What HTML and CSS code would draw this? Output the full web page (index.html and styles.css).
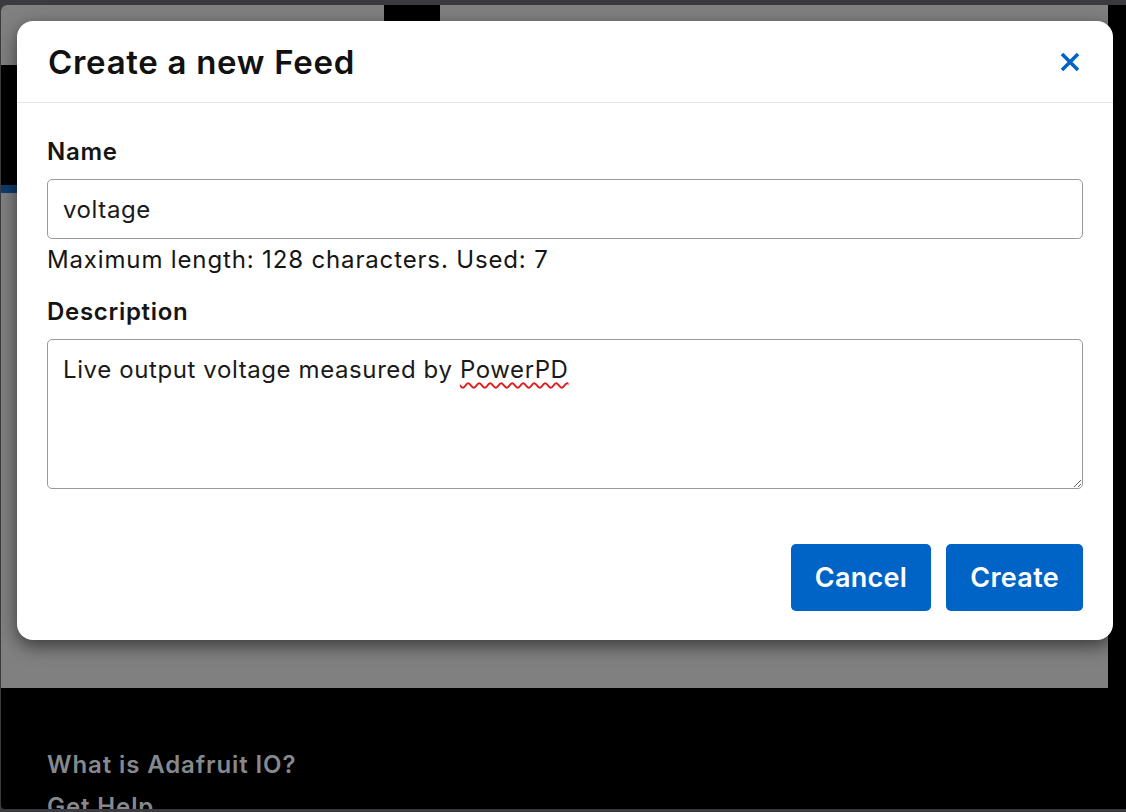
FILE: index.html
```html
<!DOCTYPE html>
<html lang="en">
<head>
  <meta charset="UTF-8" />
  <meta name="viewport" content="width=device-width, initial-scale=1" />
  <title>Create a new Feed</title>
  <link rel="stylesheet" href="styles.css">
</head>
<body>
  <div class="screen">
    <div class="page">
      <div class="page-top">
        <div class="tab-block"></div>
      </div>
      <div class="page-side">
        <div class="side-dark"></div>
        <div class="side-accent"></div>
      </div>
    </div>

    <footer class="site-footer">
      <a href="#">What is Adafruit IO?</a>
      <a href="#">Get Help</a>
    </footer>

    <!-- Create feed dialog -->
    <div class="modal">
      <div class="modal-header">
        <h5 class="modal-title">Create a new Feed</h5>
        <button class="close" type="button" aria-label="Close">
          <svg width="20" height="20" viewBox="0 0 20 20">
            <path d="M2 2 L18 18 M18 2 L2 18" stroke="#0063c6" stroke-width="3.6" fill="none" />
          </svg>
        </button>
      </div>

      <div class="modal-body">
        <label class="field-label">Name</label>
        <div class="form-control">voltage</div>
        <div class="help-text">Maximum length: 128 characters. Used: 7</div>

        <label class="field-label desc-label">Description</label>
        <div class="form-control textarea">Live output voltage measured by <span class="misspelled">PowerPD</span></div>
      </div>

      <div class="modal-footer">
        <button class="btn" type="button">Cancel</button>
        <button class="btn" type="button">Create</button>
      </div>
    </div>
  </div>
</body>
</html>
```

FILE: styles.css
```css
* {
  box-sizing: border-box;
  margin: 0;
  padding: 0;
}

body {
  font-family: Inter, "Open Sans", sans-serif;
  background-color: #3b3b3f;
  color: #151515;
  width: 1126px;
  height: 812px;
  overflow: hidden;
  padding: 5px 0 3px 1px;
}

.screen {
  position: relative;
  height: 804px;
  background-color: #000;
  border-radius: 6px 0 0 4px;
  overflow: hidden;
}

/* Page behind the dialog (dimmed) */
.page {
  width: 1107px;
  height: 683px;
  background-color: #808080;
}

.page-top {
  height: 60px;
}

.tab-block {
  width: 56px;
  height: 16px;
  margin-left: 383px;
  background-color: #000;
}

.page-side {
  width: 16px;
}

.side-dark {
  height: 120px;
  background-color: #000;
}

.side-accent {
  height: 8px;
  background-color: #0d3b6e;
}

.site-footer {
  height: 121px;
  padding: 59px 46px 0;
  display: flex;
  flex-direction: column;
  gap: 6px;
}

.site-footer a {
  color: #85898e;
  font-weight: 600;
  font-size: 24px;
  line-height: 36px;
  letter-spacing: 0.9px;
  text-decoration: none;
}

/* Dialog */
.modal {
  position: absolute;
  left: 16px;
  top: 16px;
  width: 1096px;
  background-color: #fff;
  border-radius: 16px;
  box-shadow: 0 6px 18px rgba(0, 0, 0, 0.55);
}

.modal-header {
  height: 82px;
  padding: 0 33px 0 31px;
  display: flex;
  justify-content: space-between;
  align-items: center;
  border-bottom: 1px solid #e4e4e4;
}

.modal-title {
  font-size: 33px;
  font-weight: 600;
  line-height: 42px;
  letter-spacing: 0.7px;
  color: #111;
}

.close {
  background: none;
  border: none;
  width: 20px;
  height: 20px;
  display: flex;
}

.modal-body {
  padding: 31px 30px 0;
}

.field-label {
  display: block;
  font-size: 24px;
  font-weight: 600;
  line-height: 36px;
  letter-spacing: 0.7px;
  margin-bottom: 9px;
}

.desc-label {
  margin-top: 16px;
}

.form-control {
  height: 60px;
  padding: 12px 15px 10px;
  border: 1px solid #9a9a9a;
  border-radius: 5px;
  font-size: 24px;
  line-height: 36px;
  letter-spacing: 0.6px;
  color: #1a1a1a;
}

.textarea {
  height: 150px;
  resize: vertical;
  overflow: auto;
}

.misspelled {
  text-decoration: underline wavy #e01b1b;
  text-decoration-thickness: 1.5px;
  text-underline-offset: 4px;
}

.help-text {
  font-size: 24px;
  line-height: 36px;
  letter-spacing: 0.85px;
  margin-top: 3px;
}

.modal-footer {
  padding: 55px 30px 29px;
  display: flex;
  justify-content: flex-end;
  gap: 15px;
}

.btn {
  background-color: #0063c6;
  color: #fff;
  border: none;
  border-radius: 5px;
  font-family: Inter, "Open Sans", sans-serif;
  font-size: 27px;
  font-weight: 600;
  line-height: 37px;
  letter-spacing: 0.3px;
  padding: 15px 24px;
}
```
